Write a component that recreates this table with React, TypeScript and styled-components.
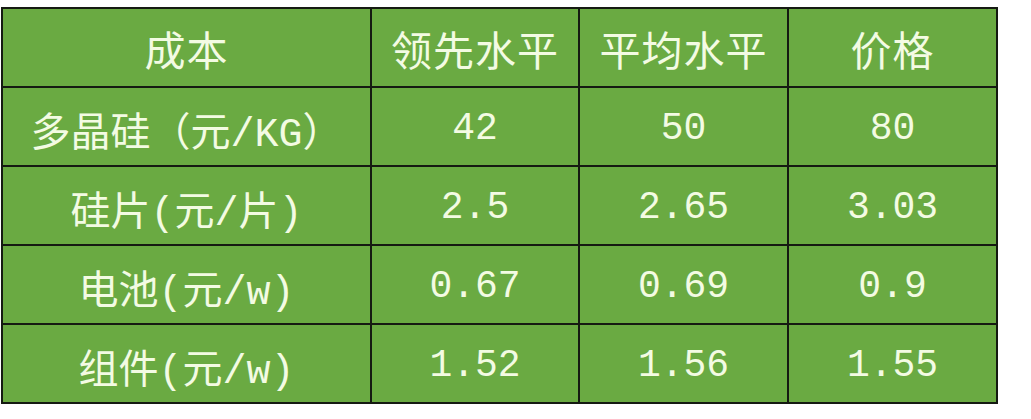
import React from 'react';
import styled, { createGlobalStyle } from 'styled-components';

const GlobalStyle = createGlobalStyle`
  html, body {
    margin: 0;
    padding: 0;
    background: #ffffff;
  }
`;

const header = ['成本', '领先水平', '平均水平', '价格'];

const rows: string[][] = [
  ['多晶硅（元/KG）', '42', '50', '80'],
  ['硅片(元/片)', '2.5', '2.65', '3.03'],
  ['电池(元/w)', '0.67', '0.69', '0.9'],
  ['组件(元/w)', '1.52', '1.56', '1.55'],
];

const App: React.FC = () => (
  <>
    <GlobalStyle />
    <Page>
      <StyledTable>
        {header.map((h) => (
          <StyledCell key={h} head>
            {h}
          </StyledCell>
        ))}
        {rows.map((row) =>
          row.map((value, i) => (
            <StyledCell key={row[0] + i} first={i === 0}>
              {value}
            </StyledCell>
          )),
        )}
      </StyledTable>
    </Page>
  </>
);

const Page = styled.div`
  padding: 7px 0 0 1px;
`;

const StyledTable = styled.div`
  display: grid;
  grid-template-columns: 367px 206px 207px 207px;
  grid-auto-rows: 77px;
  gap: 2px;
  padding: 2px;
  width: fit-content;
  background: #151a12;
`;

const StyledCell = styled.div<{ head?: boolean; first?: boolean }>`
  display: flex;
  align-items: center;
  justify-content: center;
  background: #6aaa42;
  color: #f3fbe3;
  font-family: 'Liberation Mono', 'Noto Sans CJK SC', monospace;
  font-size: ${(props) => (props.head ? '41px' : props.first ? '40px' : '38px')};
  letter-spacing: ${(props) => (props.head ? '1px' : '0')};
  padding-top: ${(props) => (props.head ? '0' : '4px')};
`;

export default App;
